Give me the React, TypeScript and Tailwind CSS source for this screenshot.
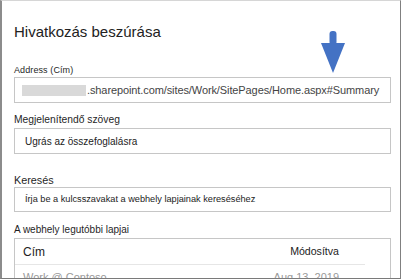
import React from "react";

function Field({ label, labelClass, children }: { label: string; labelClass: string; children: React.ReactNode }) {
  return (
    <div>
      <div className={labelClass}>{label}</div>
      {children}
    </div>
  );
}

export default function App() {
  return (
    <div className="relative w-[402px] h-[280px] overflow-hidden bg-white font-['Liberation_Sans',Arial,sans-serif] text-[#1f1f1f]">
      <div className="h-[279px] w-[401px] border-l-2 border-t border-r border-b border-l-[#8c8c8c] border-t-[#d6d6d6] border-r-[#808080] border-b-[#7a7a7a] overflow-hidden">
        <div className="pl-[12px] pr-[9px]">
          <h1 className="pt-[21px] text-[15px] leading-[20px] text-[#222]">Hivatkozás beszúrása</h1>

          <div className="mt-[22px]">
            <Field label="Address (Cím)" labelClass="text-[9px] leading-[13px] tracking-[0.1px]">
              <div className="h-[26px] w-[377px] border border-[#c6c6c6] flex items-center pl-[7px] text-[11px] tracking-[-0.1px] text-[#444]">
                <span className="inline-block h-[11px] w-[64px] shrink-0 bg-[#d9d9d9]" />
                <span className="ml-[1px] whitespace-nowrap">.sharepoint.com/sites/Work/SitePages/Home.aspx#Summary</span>
              </div>
            </Field>
          </div>

          <div className="mt-[9px]">
            <Field label="Megjelenítendő szöveg" labelClass="text-[10.3px] leading-[15px]">
              <div className="mt-[1px] h-[26px] w-[377px] border border-[#c6c6c6] flex items-center pl-[10px] text-[10px] text-[#222]">
                Ugrás az összefoglalásra
              </div>
            </Field>
          </div>

          <div className="mt-[20px]">
            <Field label="Keresés" labelClass="text-[10.8px] leading-[13px]">
              <div className="h-[25px] w-[377px] border border-[#c6c6c6] flex items-center pl-[10px] text-[9.2px] text-[#222]">
                Írja be a kulcsszavakat a webhely lapjainak kereséséhez
              </div>
            </Field>
          </div>

          <div className="mt-[11px]">
            <Field label="A webhely legutóbbi lapjai" labelClass="text-[10px] leading-[14px]">
              <div className="mt-[1px] w-[377px] h-[60px] border border-[#c6c6c6]">
                <div className="mr-[25px] h-[26px] border-b border-[#e6e6e6] flex items-center justify-between pl-[8px] pr-[26px] text-[#222]">
                  <span className="text-[12px]">Cím</span>
                  <span className="text-[10.6px]">Módosítva</span>
                </div>
                <div className="mr-[25px] flex justify-between pl-[8px] pr-[26px] pt-[4px] text-[11px] text-[#9a9a9a]">
                  <span>Work @ Contoso</span>
                  <span>Aug 13, 2019</span>
                </div>
              </div>
            </Field>
          </div>
        </div>
      </div>

      <svg className="absolute left-[321px] top-[31px]" width="25" height="43" viewBox="0 0 25 43">
        <rect x="8.5" y="0" width="7" height="14" rx="3" fill="#4472c4" />
        <path d="M0 12 L24 12 L12 42 Z" fill="#4472c4" />
      </svg>
    </div>
  );
}
